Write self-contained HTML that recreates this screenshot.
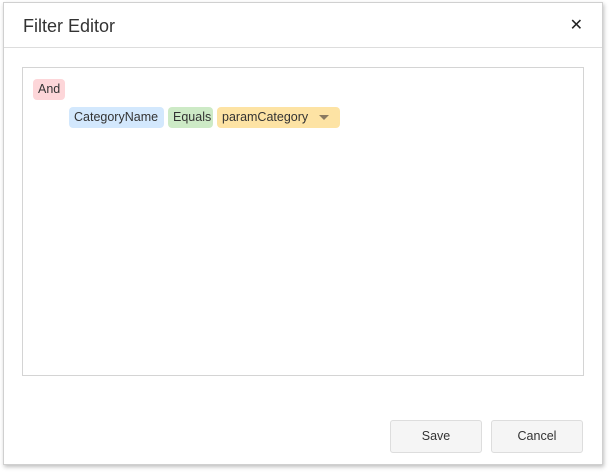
<!DOCTYPE html><html><head><style>
body{margin:0;width:610px;height:472px;background:#fff;font-family:"Liberation Sans",sans-serif;position:relative;overflow:hidden}
.dlg{position:absolute;left:3px;top:2px;width:598px;height:461px;border:1px solid #d0d0d0;box-shadow:1px 2px 4px rgba(0,0,0,.25);background:#fff}
.hd{position:absolute;left:0;top:0;right:0;height:44px;border-bottom:1px solid #ddd}
.t{position:absolute;left:19px;top:13px;font-size:18px;color:#333}
.x{position:absolute;right:19px;top:12px;font-size:16px;color:#222}
.box{position:absolute;left:18px;top:64px;width:560px;height:307px;border:1px solid #d4d4d4}
.c{position:absolute;height:21px;line-height:21px;font-size:12.5px;color:#333;border-radius:4px;padding:0 5px;box-sizing:border-box;white-space:nowrap}
.b{position:absolute;top:417px;height:33px;width:92px;border:1px solid #ddd;border-radius:3px;background:#f5f5f5;font-size:12.5px;color:#333;text-align:center;line-height:31px;box-sizing:border-box}
</style></head><body>
<div class="dlg">
<div class="hd"><div class="t">Filter Editor</div><div class="x">✕</div></div>
<div class="box"></div>
<div class="c" style="left:29px;top:76px;width:32px;background:#fdd6d9">And</div>
<div class="c" style="left:65px;top:104px;width:95px;background:#d3e8fd">CategoryName</div>
<div class="c" style="left:164px;top:104px;width:45px;background:#cdeac6">Equals</div>
<div class="c" style="left:213px;top:104px;width:123px;background:#fde3a4">paramCategory<span style="position:absolute;left:102px;top:8px;width:0;height:0;border-left:5px solid transparent;border-right:5px solid transparent;border-top:5px solid #8a7a60"></span></div>
<div class="b" style="left:386px">Save</div>
<div class="b" style="left:487px">Cancel</div>
</div>
</body></html>
